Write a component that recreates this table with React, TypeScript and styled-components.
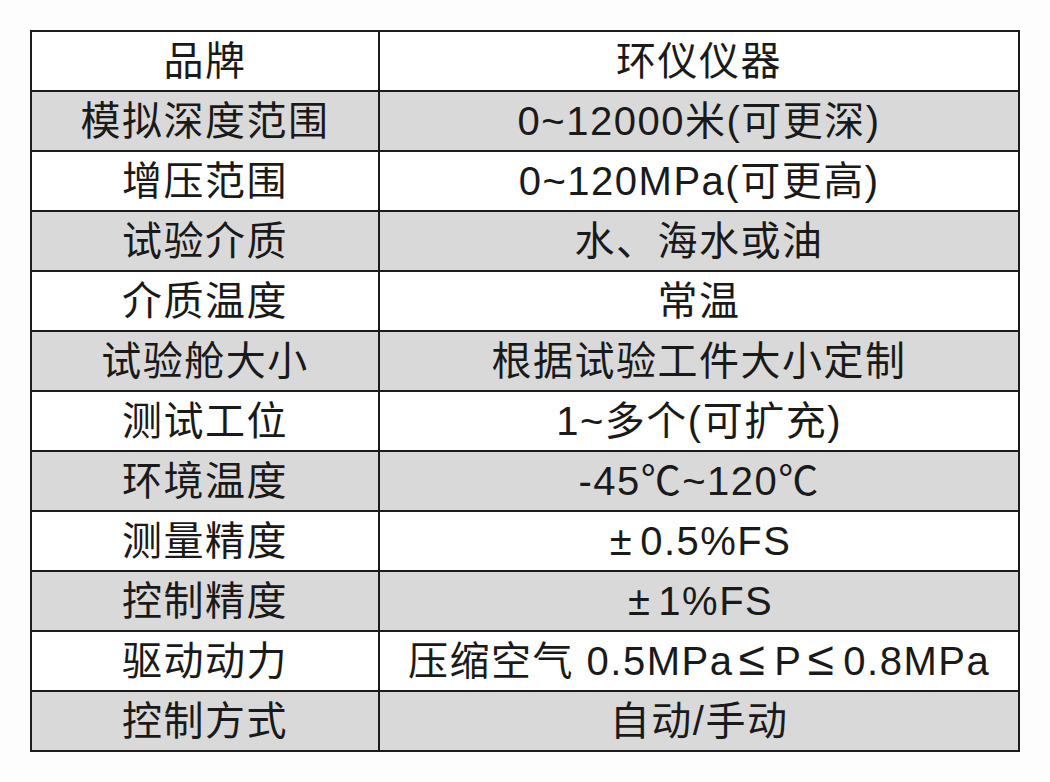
import React from 'react';
import styled, { createGlobalStyle } from 'styled-components';

const GlobalStyle = createGlobalStyle`
    html, body {
        margin: 0;
        padding: 0;
        background: #fdfdfd;
    }
`;

const rows: [string, string][] = [
    ['品牌', '环仪仪器'],
    ['模拟深度范围', '0~12000米(可更深)'],
    ['增压范围', '0~120MPa(可更高)'],
    ['试验介质', '水、海水或油'],
    ['介质温度', '常温'],
    ['试验舱大小', '根据试验工件大小定制'],
    ['测试工位', '1~多个(可扩充)'],
    ['环境温度', '-45℃~120℃'],
    ['测量精度', '±0.5%FS'],
    ['控制精度', '±1%FS'],
    ['驱动动力', '压缩空气 0.5MPa≤P≤0.8MPa'],
    ['控制方式', '自动/手动'],
];

const Page = styled.div`
    padding: 30px 0 0 30px;
    width: 1050px;
    height: 782px;
    box-sizing: border-box;
`;

const Table = styled.table`
    border-collapse: collapse;
    width: 990px;
    font-family: 'Liberation Sans', 'Noto Sans CJK SC', sans-serif;
    color: #1a1a1a;
`;

const Row = styled.tr<{ $shaded: boolean }>`
    height: 60px;
    background: ${(p) => (p.$shaded ? '#d9d9d9' : '#ffffff')};
`;

const Cell = styled.td<{ $w: number }>`
    width: ${(p) => p.$w}px;
    border: 2px solid #1c1c1c;
    padding: 0;
    text-align: center;
    vertical-align: middle;
    font-size: 40px;
    line-height: 56px;
    letter-spacing: 1.5px;
    white-space: nowrap;
`;

// the ± and ≤ signs sit in a full-width slot in the source
const Sym = styled.span<{ $big?: boolean }>`
    display: inline-block;
    font-size: ${(p) => (p.$big ? '1.2em' : '1em')};
    line-height: 1;
    margin: ${(p) => (p.$big ? '0 8px 0 5px' : '0 7px 0 3px')};
`;

const renderValue = (text: string) =>
    text.split(/([±≤])/).map((part, i) =>
        part === '±' || part === '≤' ? (
            <Sym key={i} $big={part === '≤'}>
                {part}
            </Sym>
        ) : (
            part
        )
    );

export default function App() {
    return (
        <Page>
            <GlobalStyle />
            <Table>
                <tbody>
                    {rows.map(([k, v], i) => (
                        <Row key={k} $shaded={i % 2 === 1}>
                            <Cell $w={350}>{k}</Cell>
                            <Cell $w={640}>{renderValue(v)}</Cell>
                        </Row>
                    ))}
                </tbody>
            </Table>
        </Page>
    );
}
